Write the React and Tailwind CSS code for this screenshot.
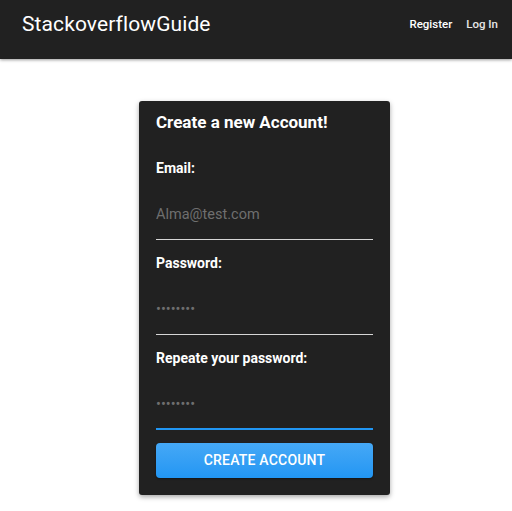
import { useState } from 'react';

// Sign-up page: dark app bar on top, centered registration card.
const App = () => {
  const [email, setEmail] = useState('');
  const [password, setPassword] = useState('');
  const [repeat, setRepeat] = useState('');

  const fields = [
    { label: 'Email:', type: 'email', placeholder: 'Alma@test.com', value: email, set: setEmail },
    { label: 'Password:', type: 'password', placeholder: '••••••••', value: password, set: setPassword },
    { label: 'Repeate your password:', type: 'password', placeholder: '••••••••', value: repeat, set: setRepeat, focused: true },
  ];

  return (
    <div className="min-h-screen bg-white font-['Roboto',sans-serif]">
      {/* App bar */}
      <header className="h-[59px] bg-[#212121] flex items-center justify-between pl-[22px] pr-[14px] shadow-[0_1px_3px_rgba(0,0,0,0.4)]">
        <h1 className="text-[21px] text-white tracking-[0.1px] -mt-[10px]">StackoverflowGuide</h1>
        <nav className="flex items-center gap-[14px] text-[11.5px] font-medium -mt-[10px]">
          <a className="text-white">Register</a>
          <a className="text-[#e6e6e6]">Log In</a>
        </nav>
      </header>

      {/* Card */}
      <div className="flex justify-center pt-[42px] pl-[17px]">
        <div className="w-[251px] bg-[#212121] rounded-[3px] shadow-[0_2px_5px_rgba(0,0,0,0.35)] px-[17px] pt-[9px] pb-[17px]">
          <h2 className="text-[17px] leading-6 font-bold text-white">Create a new Account!</h2>
          <div className="mt-[24px]">
            {fields.map((f, i) => (
              <div key={f.label} className={i > 0 ? 'mt-[13px]' : ''}>
                <label className="block text-[14px] leading-5 font-bold text-white">{f.label}</label>
                <input
                  type={f.type}
                  value={f.value}
                  onChange={(e) => f.set(e.target.value)}
                  placeholder={f.placeholder}
                  className={
                    f.focused
                      ? 'block w-full bg-transparent text-[14.5px] leading-5 text-white placeholder:text-[#6f6f6f] pt-[27px] pb-[13px] border-b-2 border-[#2196f3] outline-none'
                      : 'block w-full bg-transparent text-[14.5px] leading-5 text-white placeholder:text-[#6f6f6f] pt-[27px] pb-[14px] border-b border-[#d6d6d6] outline-none'
                  }
                />
              </div>
            ))}
          </div>
          <button className="mt-[13px] w-full h-[35px] rounded-[4px] bg-gradient-to-b from-[#45a8f6] to-[#2196f3] text-white text-[14px] font-medium uppercase tracking-[0.2px] shadow-[0_1px_2px_rgba(0,0,0,0.4)]">
            Create Account
          </button>
        </div>
      </div>
    </div>
  );
};

export default App;
